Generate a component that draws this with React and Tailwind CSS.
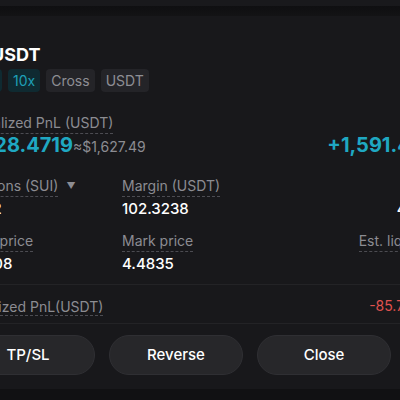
import React from 'react';

const font = { fontFamily: 'Inter, "Noto Sans", sans-serif' };

const Label = ({ children, dashed = true }) => (
  <span
    className={`text-[14px] leading-5 text-[#8c8c92] ${
      dashed ? 'border-b border-dashed border-[#4c4c52]' : ''
    }`}
  >
    {children}
  </span>
);

const Stat = ({ label, value, align = 'left', caret = false }) => (
  <div className={`flex flex-col gap-[3px] ${align === 'right' ? 'items-end' : 'items-start'}`}>
    <div className="flex h-5 items-center gap-2">
      <Label>{label}</Label>
      {caret && <span className="text-[9px] text-[#8c8c92]">▼</span>}
    </div>
    <div className="h-5 text-[15px] font-medium leading-5 text-white">{value}</div>
  </div>
);

export default function App() {
  const tags = [
    { text: 'Long', accent: true, w: 'w-[41px]' },
    { text: '10x', accent: true },
    { text: 'Cross' },
    { text: 'USDT' },
  ];

  return (
    <div className="h-[400px] w-[400px] overflow-hidden bg-[#111113]" style={font}>
      {/* previous card edge */}
      <div className="h-[6px] bg-[#19191c]" />
      <div className="h-[10px] bg-gradient-to-b from-[#0f0f11] to-[#131315]" />

      <div className="bg-[#18181b] pb-[14px] pt-[27px]">
        <div className="ml-[-39px] w-[483px]">
          {/* title */}
          <div className="h-6 text-[18px] font-bold leading-6 text-white">SUIUSDT</div>

          {/* tags */}
          <div className="mt-[2px] flex gap-[6px]">
            {tags.map((t) => (
              <span
                key={t.text}
                className={`flex h-[23px] items-center justify-center rounded-[4px] px-[5px] text-[14px] ${
                  t.w || ''
                } ${t.accent ? 'bg-[#0f2a31] text-[#1e9fb6]' : 'bg-[#242428] text-[#8e8e94]'}`}
              >
                {t.text}
              </span>
            ))}
          </div>

          {/* unrealized pnl */}
          <div className="mt-[21px] flex h-5 items-center">
            <Label>Unrealized PnL (USDT)</Label>
          </div>
          <div className="flex h-6 items-baseline justify-between">
            <div className="ml-[-8px] flex items-baseline gap-0">
              <span className="text-[20px] font-bold leading-6 text-[#1fa8c2]">+1,628.4719</span>
              <span className="text-[14px] text-[#8c8c92]">≈$1,627.49</span>
            </div>
            <span className="text-[20px] font-bold leading-6 text-[#1fa8c2]">+1,591.49%</span>
          </div>

          {/* stats */}
          <div className="mt-[19px] grid grid-cols-3 gap-y-3">
            <Stat label="Positions (SUI)" value="11422" caret />
            <Stat label="Margin (USDT)" value="102.3238" />
            <Stat label="Ratio" value="4.2871" align="right" />
            <Stat label="Entry price" value="4.3908" />
            <Stat label="Mark price" value="4.4835" />
            <Stat label="Est. liq. price" value="--" align="right" />
          </div>

          {/* realized pnl */}
          <div className="mt-[10px] border-y border-[#232326] pb-[7px] pt-[11px]">
            <div className="flex h-5 items-center justify-between">
              <span className="ml-[9px]">
                <Label>Realized PnL(USDT)</Label>
              </span>
              <span className="text-[14px] leading-5 text-[#e0524f]">-85.771836</span>
            </div>
          </div>

          {/* actions */}
          <div className="mt-[11px] flex gap-[14px]">
            {['TP/SL', 'Reverse', 'Close'].map((b) => (
              <button
                key={b}
                className="flex h-10 w-[134px] items-center justify-center rounded-full border border-[#2f2f33] bg-[#27272a] text-[15px] font-medium text-white"
              >
                {b}
              </button>
            ))}
          </div>
        </div>
      </div>
    </div>
  );
}
